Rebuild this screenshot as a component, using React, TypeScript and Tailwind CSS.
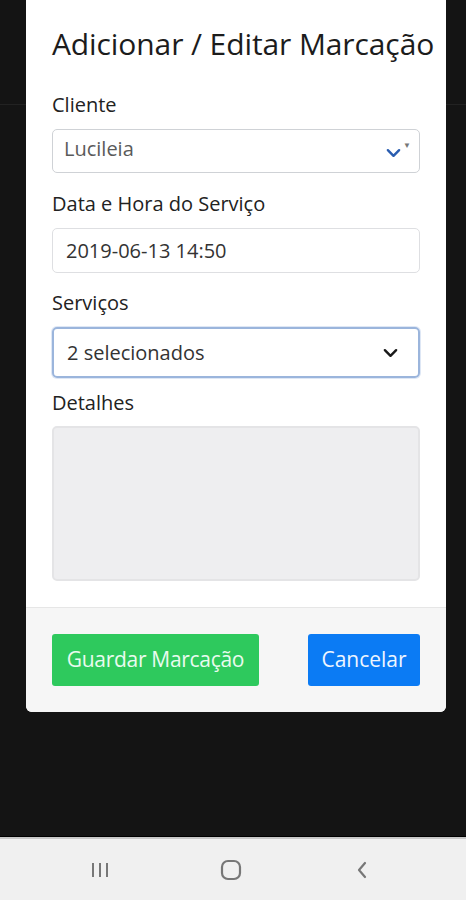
import React from "react";

function Chevron({ className }: { className?: string }) {
  return (
    <svg viewBox="0 0 16 10" className={className} fill="none" stroke="currentColor" strokeWidth={2.6} strokeLinecap="round" strokeLinejoin="round">
      <path d="M2 2l6 6 6-6" />
    </svg>
  );
}

function Label({ children, className = "" }: { children: React.ReactNode; className?: string }) {
  return <div className={`text-[20px] leading-6 text-[#222] ${className}`}>{children}</div>;
}

export default function App() {
  return (
    <div className="w-[466px] h-[900px] bg-[#141414] flex flex-col font-['Open_Sans',sans-serif] overflow-hidden">
      <div className="flex-1 relative">
        <div className="absolute left-0 right-0 top-[104px] h-px bg-[#222]" />
        <div className="relative mx-[26px] w-[420px] bg-white rounded-b-[6px] overflow-hidden">
          <div className="px-[26px] pt-[25px]">
            <h1 className="text-[30px] leading-[38px] text-[#1c1c1c] tracking-[-0.1px] whitespace-nowrap">Adicionar / Editar Marcação</h1>
            <Label className="mt-[30px]">Cliente</Label>
            <div className="mt-[12px] h-[44px] border border-[#cfd2d6] rounded-[5px] flex items-center pl-[11px] pr-[8px]">
              <span className="flex-1 text-[20px] text-[#5a5a5a] -mt-[4px]">Lucileia</span>
              <Chevron className="w-[15px] h-[10px] text-[#2a5db0] mt-[3px]" />
              <span className="text-[#777] text-[8px] leading-none mb-[12px] ml-[2px]">▼</span>
            </div>
            <Label className="mt-[19px]">Data e Hora do Serviço</Label>
            <div className="mt-[12px] h-[45px] border border-[#dedfe2] rounded-[5px] flex items-center px-[13px]">
              <span className="text-[20px] text-[#333]">2019-06-13 14:50</span>
            </div>
            <Label className="mt-[18px]">Serviços</Label>
            <div className="mt-[12px] h-[51px] border-2 border-[#9bb5dc] rounded-[5px] flex items-center pl-[13px] pr-[20px] shadow-[0_0_0_1px_rgba(160,185,225,0.35)]">
              <span className="flex-1 text-[20px] text-[#333]">2 selecionados</span>
              <Chevron className="w-[15px] h-[10px] text-[#1a1a1a]" />
            </div>
            <Label className="mt-[13px]">Detalhes</Label>
            <div className="mt-[11px] h-[155px] bg-[#eeeef0] border-2 border-[#e4e4e6] rounded-[5px]" />
          </div>
          <div className="mt-[26px] bg-[#f6f6f6] border-t border-[#e6e6e6] px-[26px] pt-[26px] pb-[26px] flex items-center justify-between">
            <button className="h-[52px] w-[207px] bg-[#2ec95d] rounded-[3px] text-[21px] text-[#e9fbef] tracking-[-0.3px]">Guardar Marcação</button>
            <button className="h-[52px] w-[112px] bg-[#0b7bf4] rounded-[3px] text-[21px] text-[#eef5ff]">Cancelar</button>
          </div>
        </div>
      </div>
      <div className="h-px bg-[#000]" />
      <div className="h-[63px] bg-[#f0f0f0] border-t-2 border-[#c9c9c9] flex items-center justify-center pr-[4px]">
        <div className="w-[131px] flex justify-center text-[#777]">
          <svg width="20" height="16" viewBox="0 0 20 16" fill="none" stroke="currentColor" strokeWidth={2}>
            <path d="M3 1v14M10 1v14M17 1v14" />
          </svg>
        </div>
        <div className="w-[131px] flex justify-center text-[#777]">
          <svg width="22" height="22" viewBox="0 0 22 22" fill="none" stroke="currentColor" strokeWidth={2.2}>
            <rect x="2" y="2" width="18" height="18" rx="6" />
          </svg>
        </div>
        <div className="w-[131px] flex justify-center text-[#777]">
          <svg width="14" height="20" viewBox="0 0 14 20" fill="none" stroke="currentColor" strokeWidth={2.2} strokeLinecap="round" strokeLinejoin="round">
            <path d="M10 3L4 10l6 7" />
          </svg>
        </div>
      </div>
    </div>
  );
}
